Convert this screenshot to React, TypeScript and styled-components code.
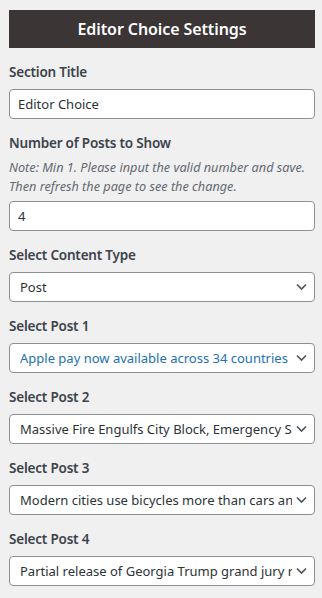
import React from 'react'
import styled, { createGlobalStyle } from 'styled-components'

const GlobalStyle = createGlobalStyle`
  html, body {
    margin: 0;
    padding: 0;
    background: #f0f0f1;
  }
  body {
    font-family: "Noto Sans", "Open Sans", Arial, sans-serif;
    color: #3c434a;
  }
  * { box-sizing: border-box; }
`

const posts = [
  { label: 'Select Post 1', value: 'Apple pay now available across 34 countries', active: true },
  { label: 'Select Post 2', value: 'Massive Fire Engulfs City Block, Emergency Services Respond' },
  { label: 'Select Post 3', value: 'Modern cities use bicycles more than cars and buses' },
  { label: 'Select Post 4', value: 'Partial release of Georgia Trump grand jury report' },
]

const Chevron = () => (
  <svg width="11" height="7" viewBox="0 0 11 7" fill="none">
    <path d="M1 1 L5.5 5.5 L10 1" stroke="#50575e" strokeWidth="1.7" />
  </svg>
)

const Dropdown = ({ value, active }: { value: string; active?: boolean }) => (
  <SelectWrap>
    <Select value={value} active={active} onChange={() => {}}>
      <option value={value}>{value}</option>
    </Select>
    <Arrow>
      <Chevron />
    </Arrow>
  </SelectWrap>
)

const App = () => {
  return (
    <Panel>
      <GlobalStyle />
      <Header>Editor Choice Settings</Header>

      <Field>
        <Label>Section Title</Label>
        <Input defaultValue="Editor Choice" />
      </Field>

      <Field>
        <Label>Number of Posts to Show</Label>
        <Note>
          Note: Min 1. Please input the valid number and save.
          <br />
          Then refresh the page to see the change.
        </Note>
        <Input defaultValue="4" />
      </Field>

      <Field>
        <Label>Select Content Type</Label>
        <Dropdown value="Post" />
      </Field>

      {posts.map((p) => (
        <Field key={p.label}>
          <Label>{p.label}</Label>
          <Dropdown value={p.value} active={p.active} />
        </Field>
      ))}
    </Panel>
  )
}

export default App

const Panel = styled.div`
  width: 322px;
  padding: 10px 7px 0 9px;
  display: flex;
  flex-direction: column;
`

const Header = styled.div`
  height: 38px;
  background: #3b3536;
  color: #ffffff;
  font-size: 16px;
  font-weight: 600;
  letter-spacing: -0.1px;
  display: flex;
  align-items: center;
  justify-content: center;
  margin-bottom: 14px;
`

const Field = styled.div`
  display: flex;
  flex-direction: column;
  margin-bottom: 14px;
`

const Label = styled.div`
  font-size: 13.5px;
  font-weight: 600;
  line-height: 20px;
  letter-spacing: -0.2px;
  color: #3c434a;
  margin-bottom: 7px;
`

const Note = styled.div`
  font-size: 12.7px;
  font-style: italic;
  line-height: 19px;
  color: #646970;
  margin-top: -2px;
  margin-bottom: 5px;
  white-space: nowrap;
`

const Input = styled.input`
  width: 100%;
  height: 30px;
  border: 1px solid #8c8f94;
  border-radius: 4px;
  background: #fff;
  padding: 0 8px;
  font-family: inherit;
  font-size: 13px;
  color: #2c3338;
  outline: none;
`

const SelectWrap = styled.div`
  position: relative;
  width: 100%;
`

const Select = styled.select<{ active?: boolean }>`
  appearance: none;
  -webkit-appearance: none;
  width: 100%;
  height: 30px;
  border: 1px solid #8c8f94;
  border-radius: 4px;
  background: #fff;
  padding: 0 22px 0 10px;
  font-family: inherit;
  font-size: 13px;
  color: ${({ active }) => (active ? '#2271b1' : '#2c3338')};
  outline: none;
`

const Arrow = styled.span`
  position: absolute;
  right: 8px;
  top: 50%;
  transform: translateY(-50%);
  display: flex;
  pointer-events: none;
`
